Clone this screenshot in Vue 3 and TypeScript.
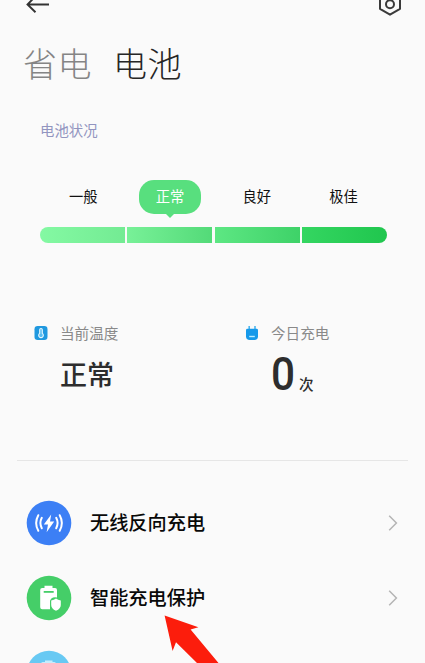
<script setup lang="ts">
interface Level {
  label: string
  active?: boolean
}

const levels: Level[] = [
  { label: '一般' },
  { label: '正常', active: true },
  { label: '良好' },
  { label: '极佳' },
]
</script>

<template>
  <main class="page">
    <header class="topbar">
      <svg class="back" width="24" height="26" viewBox="0 0 24 26" fill="none" stroke="#333" stroke-width="1.9">
        <path d="M1.5 14.5H23M9.5 6.2L1.5 14.5L9.5 22.2" />
      </svg>
      <svg class="settings" width="24" height="26" viewBox="0 0 24 26" fill="none" stroke="#3a3a3a" stroke-width="2">
        <path d="M12 2.4L22 7.8V18.8L12 24.7L2 18.8V7.8Z" stroke-linejoin="round" />
        <circle cx="12" cy="14.2" r="4" />
      </svg>
    </header>

    <nav class="tabs">
      <span class="tab muted">省电</span>
      <span class="tab">电池</span>
    </nav>

    <section class="health">
      <h2 class="caption">电池状况</h2>
      <div class="levels">
        <div v-for="level in levels" :key="level.label" class="level">
          <span :class="['name', { active: level.active }]">{{ level.label }}</span>
        </div>
      </div>
      <div class="meter">
        <i v-for="level in levels" :key="level.label" class="segment"></i>
      </div>
    </section>

    <section class="stats">
      <div class="stat">
        <svg class="stat-icon" width="14" height="16" viewBox="0 0 14 16">
          <rect x="0.5" y="1" width="13" height="14" rx="3.2" fill="#1f98df" />
          <path d="M5.7 8.4V4.8a1.3 1.3 0 0 1 2.6 0v3.6a2.3 2.3 0 1 1-2.6 0Z" fill="#58bdf2" stroke="#e8f8ff" stroke-width="1.1" />
        </svg>
        <div class="stat-body">
          <div class="stat-label">当前温度</div>
          <div class="stat-value">正常</div>
        </div>
      </div>
      <div class="stat">
        <svg class="stat-icon" width="14" height="16" viewBox="0 0 14 16">
          <path d="M4.2 1V5M10 1V5" stroke="#4bb6ee" stroke-width="1.6" />
          <path d="M1 5.2Q1 3.8 2.4 3.8H11.6Q13 3.8 13 5.2V11.2Q13 15 9.2 15H4.8Q1 15 1 11.2Z" fill="#1599ea" />
          <path d="M4.2 11.5H9.8" stroke="#b9ecff" stroke-width="1.4" />
        </svg>
        <div class="stat-body">
          <div class="stat-label">今日充电</div>
          <div class="stat-value count"><span class="number">0</span><span class="unit">次</span></div>
        </div>
      </div>
    </section>

    <hr class="divider" />

    <section class="menu">
      <div class="item">
        <svg class="item-icon" width="46" height="46" viewBox="0 0 46 46">
          <circle cx="23" cy="23" r="22.3" fill="#3c7ff5" />
          <path d="M25.2 14.4L17.8 24.4H22L20.6 32.2L28.2 21.4H24Z" fill="#fff" />
          <g fill="none" stroke="#fff" stroke-width="2" stroke-linecap="round">
            <path d="M15.8 17.8Q13 23 15.8 28.3M12.3 15.2Q8 23 12.3 30.8" />
            <path d="M30.2 17.8Q33 23 30.2 28.3M33.7 15.2Q38 23 33.7 30.8" />
          </g>
        </svg>
        <span class="item-label">无线反向充电</span>
        <svg class="chevron" width="10" height="18" viewBox="0 0 10 18"><path d="M1.2 1.8L8.4 9L1.2 16.2" /></svg>
      </div>
      <div class="item">
        <svg class="item-icon" width="46" height="46" viewBox="0 0 46 46">
          <circle cx="23" cy="23" r="22.3" fill="#45ce68" />
          <path d="M18.5 10.8H26.5V13H29Q31 13 31 15V22.4Q25 21.4 24 26V34.2H16.2Q14.2 34.2 14.2 32.2V15Q14.2 13 16.2 13H18.5Z" fill="#fff" />
          <path d="M17.7 16.9H27.7" stroke="#45ce68" stroke-width="1.8" />
          <path d="M30 23.6Q32 25 34.8 25.4V30Q34.8 33.8 30 35.8Q25.2 33.8 25.2 30V25.4Q28 25 30 23.6Z" fill="#fff" stroke="#45ce68" stroke-width="1" paint-order="stroke" />
        </svg>
        <span class="item-label">智能充电保护</span>
        <svg class="chevron" width="10" height="18" viewBox="0 0 10 18"><path d="M1.2 1.8L8.4 9L1.2 16.2" /></svg>
      </div>
      <div class="item">
        <svg class="item-icon" width="46" height="46" viewBox="0 0 46 46">
          <circle cx="23" cy="23" r="22.3" fill="#68c9f3" />
          <path d="M19 10.5H26.5V12H28Q30 12 30 14V34H15V14Q15 12 17 12H19Z" fill="#c5edfd" />
        </svg>
      </div>
    </section>

    <svg class="pointer" width="56" height="48" viewBox="0 0 56 48">
      <path d="M0.6 0.6L34.4 12.2L26.6 14.4L54.5 48H33L12 27.3L8.6 36Z" fill="#fc1d0c" />
    </svg>
  </main>
</template>

<style>
body {
  overflow: hidden;
  background: #fafafa;
}
</style>

<style scoped>
.page {
  position: relative;
  box-sizing: border-box;
  width: 425px;
  height: 663px;
  overflow: hidden;
  background: #fafafa;
  color: #111;
  font-family: Roboto, "Noto Sans CJK SC", sans-serif;
}

svg {
  display: block;
  flex: none;
}

.topbar {
  display: flex;
  justify-content: space-between;
  height: 39px;
  padding: 0 23px 0 26px;
}

.back,
.settings {
  margin-top: -10px;
}

.tabs {
  display: flex;
  gap: 21px;
  height: 48px;
  padding-left: 23px;
}

.tab {
  color: #262626;
  font-family: "Noto Sans CJK SC", sans-serif;
  font-size: 34px;
  font-weight: 300;
  line-height: 48px;
  letter-spacing: 0.5px;
}

.muted {
  color: #858585;
}

.health {
  padding: 33px 38px 0 40px;
}

.caption {
  margin: 0;
  color: #9295c0;
  font-size: 14.4px;
  font-weight: 400;
  line-height: 24px;
}

.levels {
  display: grid;
  grid-template-columns: repeat(4, 1fr);
  height: 47px;
  margin-top: 36px;
}

.level {
  display: flex;
  justify-content: center;
}

.name {
  position: relative;
  box-sizing: border-box;
  width: 62px;
  height: 34px;
  padding-top: 1px;
  border-radius: 15px;
  font-size: 14.3px;
  line-height: 33px;
  text-align: center;
}

.active {
  background: #58df7e;
  color: #fff;
}

.active::after {
  position: absolute;
  top: 33px;
  left: 26px;
  border: 5px solid transparent;
  border-top-color: #58df7e;
  border-bottom: 0;
  content: "";
}

.meter {
  display: grid;
  grid-template-columns: repeat(4, 1fr);
  gap: 2.5px;
  height: 16px;
}

.segment:nth-child(1) {
  border-radius: 8px 0 0 8px;
  background: linear-gradient(90deg, #84f9a3, #73eb93);
}

.segment:nth-child(2) {
  background: linear-gradient(90deg, #78f198, #53da78);
}

.segment:nth-child(3) {
  background: linear-gradient(90deg, #5de783, #3ed268);
}

.segment:nth-child(4) {
  border-radius: 0 8px 8px 0;
  background: linear-gradient(90deg, #34d661, #20c64e);
}

.stats {
  display: grid;
  grid-template-columns: 211px 1fr;
  height: 137px;
  padding: 80px 0 0 34px;
}

.stat {
  display: flex;
  gap: 12px;
}

.stat-icon {
  margin-top: 2px;
}

.stat-label {
  color: #898989;
  font-size: 14.6px;
  line-height: 22px;
}

.stat-value {
  color: #2d2d2d;
  font-size: 27px;
  font-weight: 500;
  line-height: 40px;
  margin-top: 11px;
}

.count {
  display: flex;
  align-items: baseline;
  gap: 5px;
  margin-top: 9px;
}

.number {
  width: 23px;
  font-size: 46px;
  line-height: 40px;
  transform: scaleX(0.92);
  transform-origin: left;
}

.unit {
  font-size: 14.5px;
}

.divider {
  height: 1px;
  margin: 0 17px;
  border: 0;
  background: #e6e6e6;
}

.menu {
  padding: 24px 27px 0 26px;
}

.item {
  display: flex;
  align-items: center;
  height: 75px;
}

.item-label {
  flex: 1;
  padding: 3px 0 0 18px;
  color: #090909;
  font-size: 19.2px;
  font-weight: 500;
  line-height: 28px;
}

.chevron {
  fill: none;
  stroke: #b4b4b4;
  stroke-width: 1.5;
}

.pointer {
  position: absolute;
  top: 615px;
  left: 164px;
}
</style>
